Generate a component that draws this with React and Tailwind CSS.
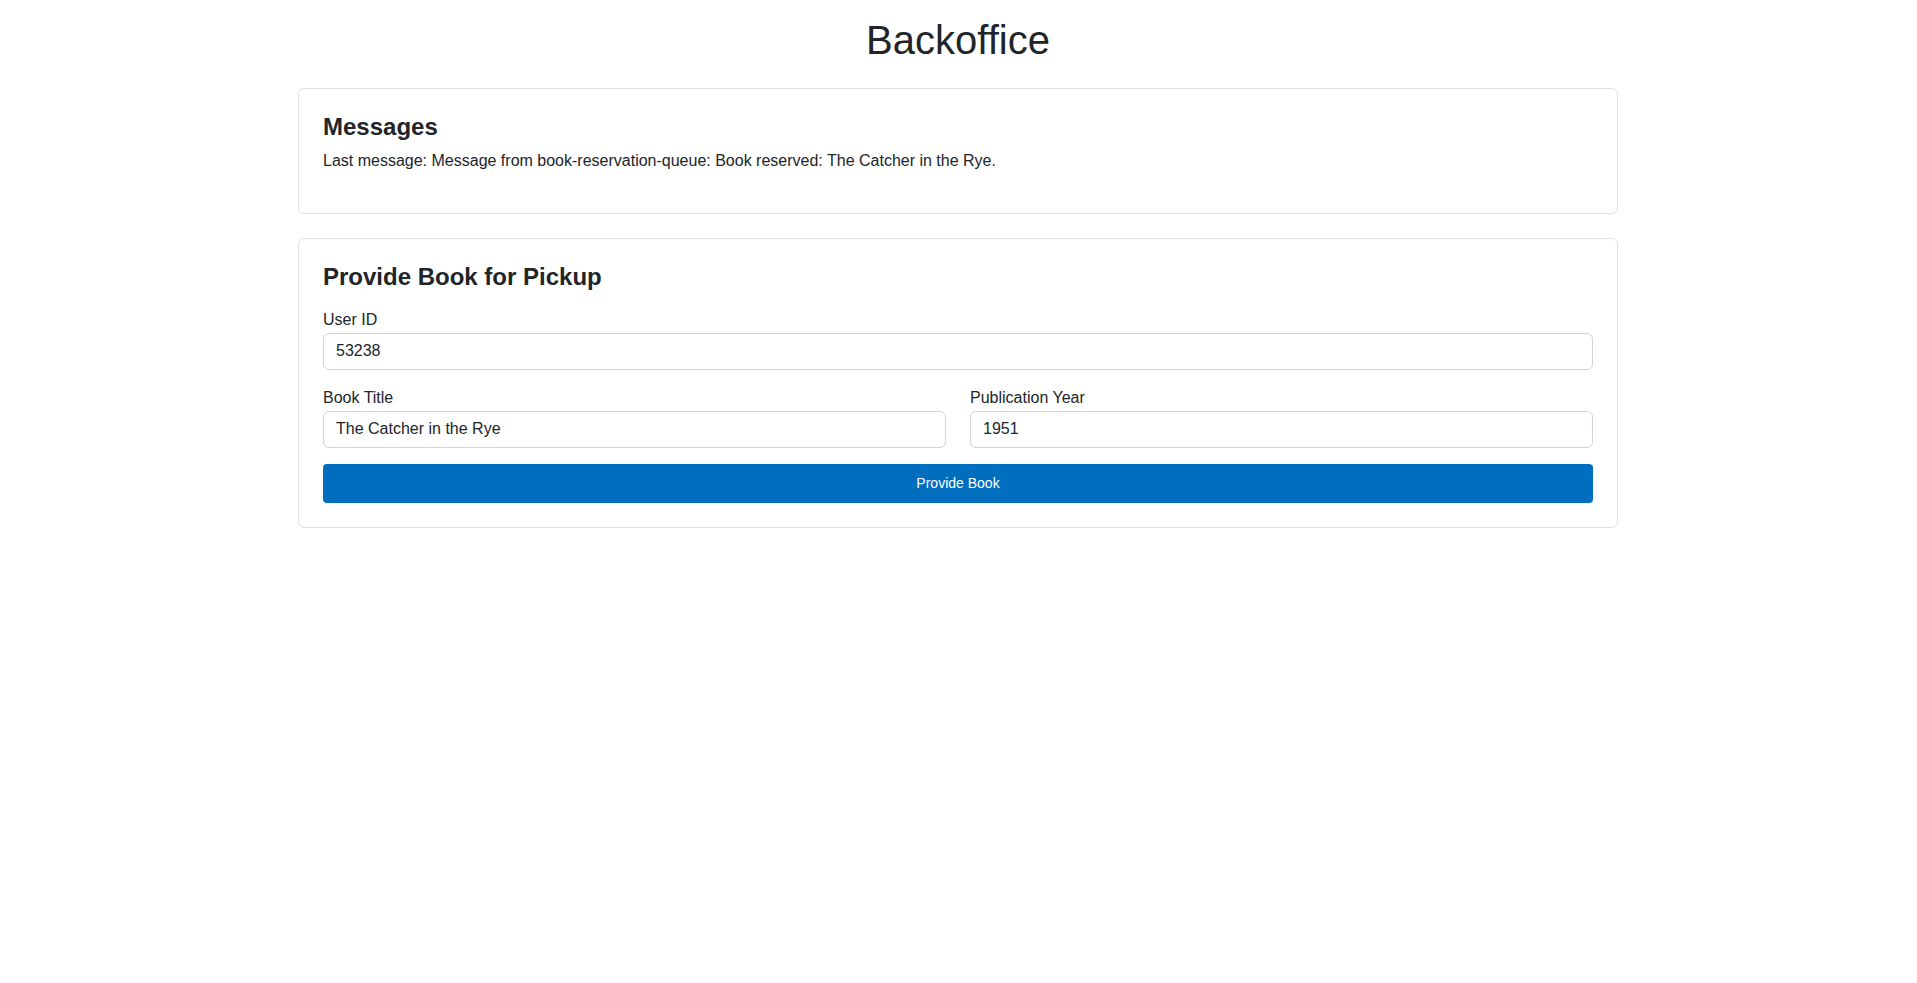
export default function App() {
  return (
    <div className="min-h-screen bg-white pr-px text-[#212529]" style={{ fontFamily: '"Liberation Sans", Arial, sans-serif' }}>
      <div className="mx-auto max-w-[1320px] pt-4">
        <h1 className="mb-6 text-center text-[40px] font-normal leading-[1.2]">Backoffice</h1>

        <div className="mb-6 rounded-md border border-[#dee2e6] bg-white px-6 pb-6 pt-6">
          <h2 className="mb-[7px] text-2xl font-bold leading-[1.2]">Messages</h2>
          <p className="mb-4 text-base leading-6">
            Last message: Message from book-reservation-queue: Book reserved: The Catcher in the Rye.
          </p>
        </div>

        <div className="rounded-md border border-[#dee2e6] bg-white p-6">
          <h2 className="mb-4 text-2xl font-bold leading-[1.2]">Provide Book for Pickup</h2>

          <div className="mb-4">
            <label className="mb-px block text-base leading-6">User ID</label>
            <input
              className="block h-[37px] w-full rounded-md border border-[#ced4da] px-3 text-base text-[#212529] outline-none"
              defaultValue="53238"
            />
          </div>

          <div className="mb-4 grid grid-cols-2 gap-6">
            <div>
              <label className="mb-px block text-base leading-6">Book Title</label>
              <input
                className="block h-[37px] w-full rounded-md border border-[#ced4da] px-3 text-base text-[#212529] outline-none"
                defaultValue="The Catcher in the Rye"
              />
            </div>
            <div>
              <label className="mb-px block text-base leading-6">Publication Year</label>
              <input
                className="block h-[37px] w-full rounded-md border border-[#ced4da] px-3 text-base text-[#212529] outline-none"
                defaultValue="1951"
              />
            </div>
          </div>

          <button className="flex h-[39px] w-full items-center justify-center rounded-[4px] bg-[#006ebe] text-sm text-white">
            Provide Book
          </button>
        </div>
      </div>
    </div>
  );
}
